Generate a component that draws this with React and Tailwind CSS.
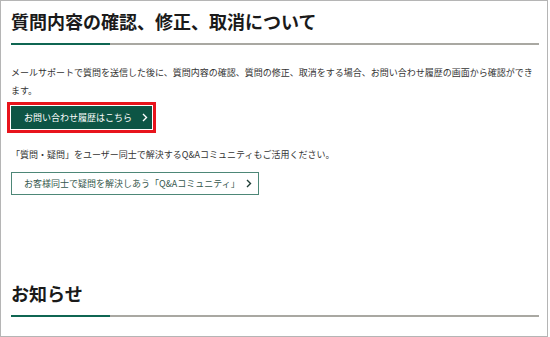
const FONT = { fontFamily: '"Noto Sans CJK JP", "Noto Sans", sans-serif' };

function Chevron({ className }) {
  return (
    <svg className={className} width="6" height="9" viewBox="0 0 6 9" fill="none">
      <path d="M1 1l3.5 3.5L1 8" stroke="currentColor" strokeWidth="1.4" />
    </svg>
  );
}

function SectionTitle({ children, className = '' }) {
  return (
    <div className={className}>
      <h2 className="text-[18px] leading-[24px] font-bold text-[#1a1a1a]">{children}</h2>
      <div className="mt-[10px] flex h-[2px]">
        <div className="w-[99px] bg-[#0f6652]" />
        <div className="flex-1 bg-[#a9a8a2]" />
      </div>
    </div>
  );
}

export default function App() {
  return (
    <div
      className="w-[548px] h-[337px] border border-[#b5b5b5] bg-white pl-[10px] pr-[8px] overflow-hidden"
      style={FONT}
    >
      <SectionTitle className="pt-[8px]">質問内容の確認、修正、取消について</SectionTitle>

      <p className="mt-[19px] text-[9px] leading-[18px] text-[#333]">
        メールサポートで質問を送信した後に、質問内容の確認、質問の修正、取消をする場合、お問い合わせ履歴の画面から確認ができます。
      </p>

      {/* highlighted history button */}
      <div className="mt-[2px] ml-[-4px] inline-block border-[3px] border-[#e8141c] p-px">
        <a className="flex items-center w-[141px] h-[23px] bg-[#0d5545] text-white text-[9px] pl-[13px]">
          <span>お問い合わせ履歴はこちら</span>
          <Chevron className="ml-[10px] text-white" />
        </a>
      </div>

      <p className="mt-[13px] text-[9px] leading-[18px] text-[#333]">
        「質問・疑問」をユーザー同士で解決するQ&amp;Aコミュニティもご活用ください。
      </p>

      <a className="mt-[8px] flex items-center w-[248px] h-[23px] border border-[#4d8777] text-[#35574d] text-[9px] pl-[12px]">
        <span>お客様同士で疑問を解決しあう「Q&amp;Aコミュニティ」</span>
        <Chevron className="ml-auto mr-[6px] text-[#1f3d35]" />
      </a>

      <SectionTitle className="mt-[86px]">お知らせ</SectionTitle>
    </div>
  );
}
